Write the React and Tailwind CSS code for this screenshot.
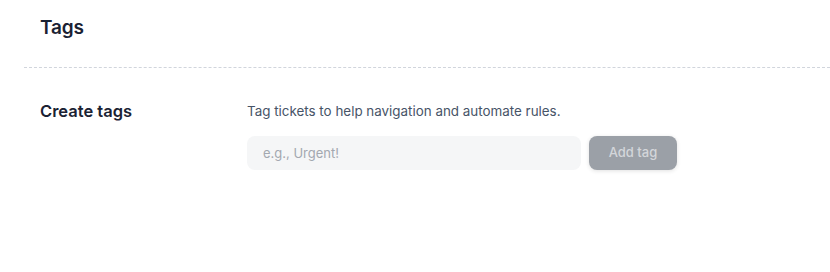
export default function App() {
  return (
    <div className="min-h-[272px] bg-white pl-6 font-['Inter',sans-serif]">
      <div className="border-b border-dashed border-gray-300 pl-4 pt-[15px] pb-[26px]">
        <h1 className="text-[19px] font-semibold leading-[26px] tracking-[-0.01em] text-[#1a2233]">Tags</h1>
      </div>
      <div className="flex pl-4 pt-[32px]">
        <h2 className="w-[207px] text-[16.5px] font-semibold leading-[22px] text-[#1a2233]">Create tags</h2>
        <div className="flex flex-col">
          <p className="text-[13.4px] leading-[20px] text-[#475467] pt-[1px]">
            Tag tickets to help navigation and automate rules.
          </p>
          <div className="mt-[15px] flex gap-[8px]">
            <input
              className="h-[34px] w-[334px] rounded-lg bg-[#f5f6f7] px-[16px] text-[13px] text-gray-700 placeholder:text-[#a3a8b0] outline-none"
              placeholder="e.g., Urgent!"
            />
            <button className="h-[34px] w-[88px] rounded-lg bg-[#9ba0a7] text-[13px] font-medium text-[#d3d6da] shadow-[0_1px_4px_rgba(0,0,0,0.12)]">
              Add tag
            </button>
          </div>
        </div>
      </div>
    </div>
  );
}
